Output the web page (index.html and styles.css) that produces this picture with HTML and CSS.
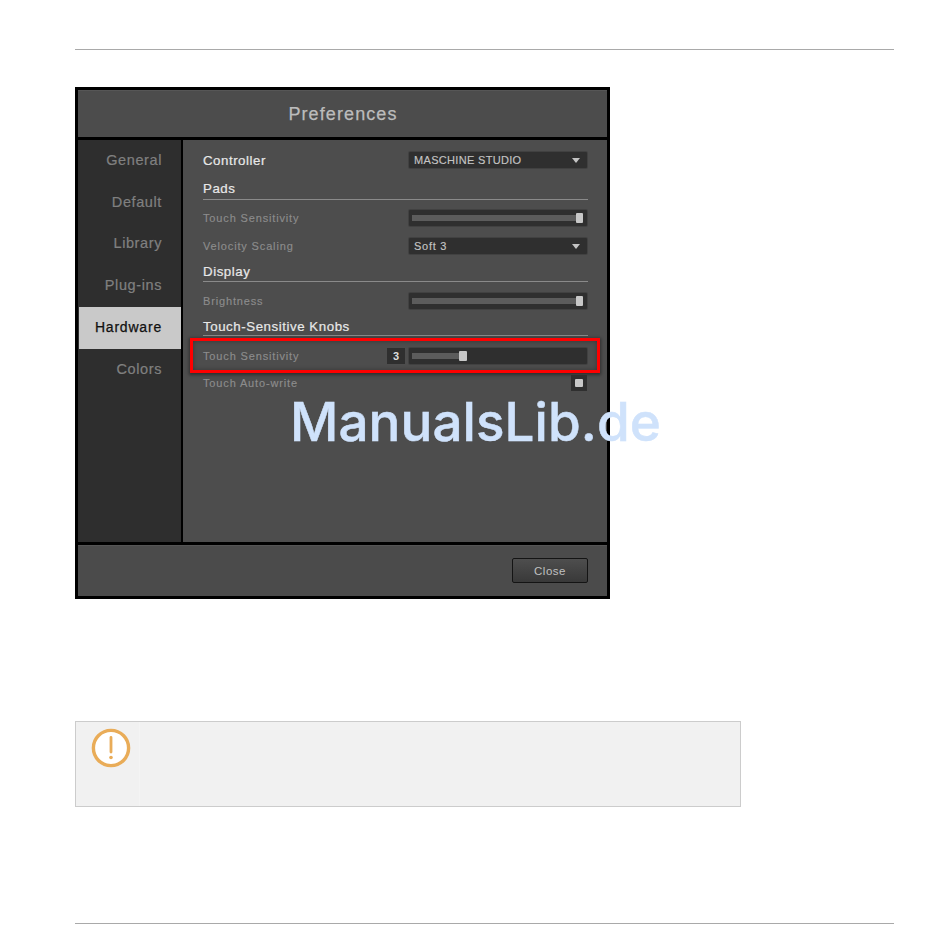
FILE: index.html
```html
<!DOCTYPE html>
<html lang="en">
<head>
<meta charset="utf-8">
<title>Preferences</title>
<link rel="stylesheet" href="styles.css">
</head>
<body>
<div class="page">
  <hr class="rule rule-top">
  <section class="window">
    <header class="title">Preferences</header>
    <div class="middle">
      <nav class="sidebar">
        <div class="tab">General</div>
        <div class="tab">Default</div>
        <div class="tab">Library</div>
        <div class="tab">Plug-ins</div>
        <div class="tab active">Hardware</div>
        <div class="tab">Colors</div>
      </nav>
      <main class="content">
        <div class="row">
          <span class="strong">Controller</span>
          <div class="select caps"><span>MASCHINE STUDIO</span><i class="arrow"></i></div>
        </div>
        <h2 class="heading h-pads">Pads</h2>
        <div class="row r-first">
          <span class="label">Touch Sensitivity</span>
          <div class="slider"><div class="track full"></div><div class="thumb"></div></div>
        </div>
        <div class="row r-next">
          <span class="label">Velocity Scaling</span>
          <div class="select"><span>Soft 3</span><i class="arrow"></i></div>
        </div>
        <h2 class="heading h-display">Display</h2>
        <div class="row r-bright">
          <span class="label">Brightness</span>
          <div class="slider"><div class="track full"></div><div class="thumb"></div></div>
        </div>
        <h2 class="heading h-knobs">Touch-Sensitive Knobs</h2>
        <div class="row r-touch highlight">
          <span class="label">Touch Sensitivity</span>
          <div class="value">3</div>
          <div class="slider wide"><div class="track part"></div><div class="thumb"></div></div>
          <div class="redbox"></div>
        </div>
        <div class="row r-auto">
          <span class="label">Touch Auto-write</span>
          <div class="check"><b></b></div>
        </div>
      </main>
    </div>
    <footer class="footer"><button class="close">Close</button></footer>
  </section>
  <div class="watermark">ManualsLib.de</div>
  <aside class="note">
    <div class="note-icon">
      <svg width="40" height="40" viewBox="0 0 40 40" aria-hidden="true">
        <circle cx="20" cy="20" r="17.6" fill="#fff" stroke="#e9ac58" stroke-width="3.4"/>
        <path d="M20 9.5V24" stroke="#e9ac58" stroke-width="2.8" stroke-linecap="round" fill="none"/>
        <circle cx="20" cy="29.5" r="1.8" fill="#e9ac58"/>
      </svg>
    </div>
    <div class="note-body"></div>
  </aside>
  <hr class="rule rule-bottom">
</div>
</body>
</html>
```

FILE: styles.css
```css
* { box-sizing: border-box; }
html, body { margin: 0; background: #fff; }
body { font-family: "Liberation Sans", Arial, sans-serif; }
.page { position: relative; width: 950px; height: 951px; padding: 49px 56px 0 75px; }
.rule { margin: 0; border: 0; height: 1px; background: #a9a9a9; }
.rule-bottom { margin-top: 116px; }

.window { width: 535px; height: 512px; margin-top: 37px; background: #000; border: 3px solid #000; display: flex; flex-direction: column; gap: 3px; }
.title { height: 47px; background: #4c4c4c; border-top: 1px solid #565656; color: #bcbcbc; font-size: 18px; letter-spacing: 1.1px; -webkit-text-stroke: 0.25px #bcbcbc; display: flex; align-items: center; justify-content: center; padding: 0 0 0 1px; }
.middle { height: 402px; display: flex; gap: 2px; }
.sidebar { width: 103px; padding-left: 1px; background: #2e2e2e; }
.tab { height: 41.8px; padding: 0 19px 2px 0; display: flex; align-items: center; justify-content: flex-end; color: #808080; font-size: 14.5px; letter-spacing: 0.6px; -webkit-text-stroke: 0.2px #808080; }
.tab.active { background: #c9c9c9; color: #111; font-size: 14px; letter-spacing: 0.8px; -webkit-text-stroke: 0.25px #111; }
.content { position: relative; width: 424px; background: #4d4d4d; padding: 12px 19px 0 20px; display: flex; flex-direction: column; }
.row { height: 16px; display: flex; align-items: center; position: relative; }
.strong { color: #e8e8e8; font-size: 13.3px; letter-spacing: 0.52px; -webkit-text-stroke: 0.2px #e8e8e8; margin-right: auto; }
.label { color: #8c8c8c; font-size: 11px; letter-spacing: 0.85px; -webkit-text-stroke: 0.15px #8c8c8c; margin-right: auto; }
.heading { margin: 0; height: 20px; border-bottom: 1px solid #8a8a8a; color: #e8e8e8; font-size: 13.3px; font-weight: 400; letter-spacing: 0.55px; -webkit-text-stroke: 0.2px #e8e8e8; line-height: 18px; }
.h-pads { margin-top: 12px; }
.r-first { margin-top: 10px; }
.r-next { margin-top: 12px; }
.h-display { margin-top: 8px; line-height: 20px; }
.r-bright { margin-top: 11px; }
.h-knobs { margin-top: 8px; height: 19px; line-height: 20px; }
.r-touch { margin-top: 12px; }
.r-auto { margin-top: 11px; }

.select { width: 178px; height: 16px; margin-right: 1px; background: #2f2f2f; border-radius: 1px; box-shadow: 0 0 0 1px #414141; display: flex; align-items: center; justify-content: space-between; padding: 0 6px 0 5px; color: #c4c4c4; font-size: 11px; letter-spacing: 0.75px; -webkit-text-stroke: 0.15px #c4c4c4; }
.select.caps { letter-spacing: 0.32px; }
.arrow { width: 0; height: 0; border-left: 4px solid transparent; border-right: 4px solid transparent; border-top: 5px solid #c4c4c4; margin-right: 1px; }
.slider { position: relative; width: 178px; height: 16px; margin-right: 1px; background: #2f2f2f; box-shadow: 0 0 0 1px #414141; border-radius: 1px; display: flex; align-items: center; padding: 0 4px 0 3px; }
.track { height: 6px; background: #5c5c5c; }
.track.full { width: 100%; }
.track.part { width: 47px; }
.thumb { position: absolute; right: 4px; top: 3px; width: 7px; height: 10px; border-radius: 1px; background: #c8c8c8; }
.slider.wide .thumb { right: auto; left: 50px; width: 8px; }
.value { width: 18px; height: 16px; background: #2f2f2f; color: #ddd; font-size: 11px; font-weight: 700; display: flex; align-items: center; justify-content: center; margin-right: 4px; }
.check { width: 16px; height: 16px; background: #2f2f2f; display: flex; align-items: center; justify-content: center; margin-right: 1px; }
.check b { width: 8px; height: 8px; background: #c8c8c8; border-radius: 1px; }
.redbox { position: absolute; left: -13px; right: -12px; top: -10px; bottom: -9px; border: 3px solid #f00; box-shadow: 0 1px 3px 1px rgba(0,0,0,.4), inset 0 0 5px rgba(0,0,0,.3); pointer-events: none; }

.footer { height: 51px; background: #4b4b4b; border-top: 1px solid #555; display: flex; align-items: center; justify-content: flex-end; padding: 0 19px 0 0; }
.close { width: 76px; height: 25px; padding: 0; border: 1px solid #141414; border-radius: 2px; background: linear-gradient(#4e4e4e, #393939); color: #c0c0c0; font: 11.5px "Liberation Sans", Arial, sans-serif; letter-spacing: 0.5px; margin: 0 0 1px; }

.watermark { position: absolute; left: 290px; top: 389px; font-family: Inter, "Liberation Sans", sans-serif; font-size: 53px; font-weight: 500; letter-spacing: 0.05px; -webkit-text-stroke: 0.5px #cfe2fb; line-height: 66px; color: #cfe2fb; white-space: nowrap; }

.note { width: 666px; height: 86px; margin-top: 122px; background: #f1f1f1; border: 1px solid #ccc; display: flex; }
.note-icon { width: 64px; flex: none; padding: 5.5px 0 0 14.5px; border-right: 1px solid #f4f4f4; }
.note-body { flex: 1; }
```
